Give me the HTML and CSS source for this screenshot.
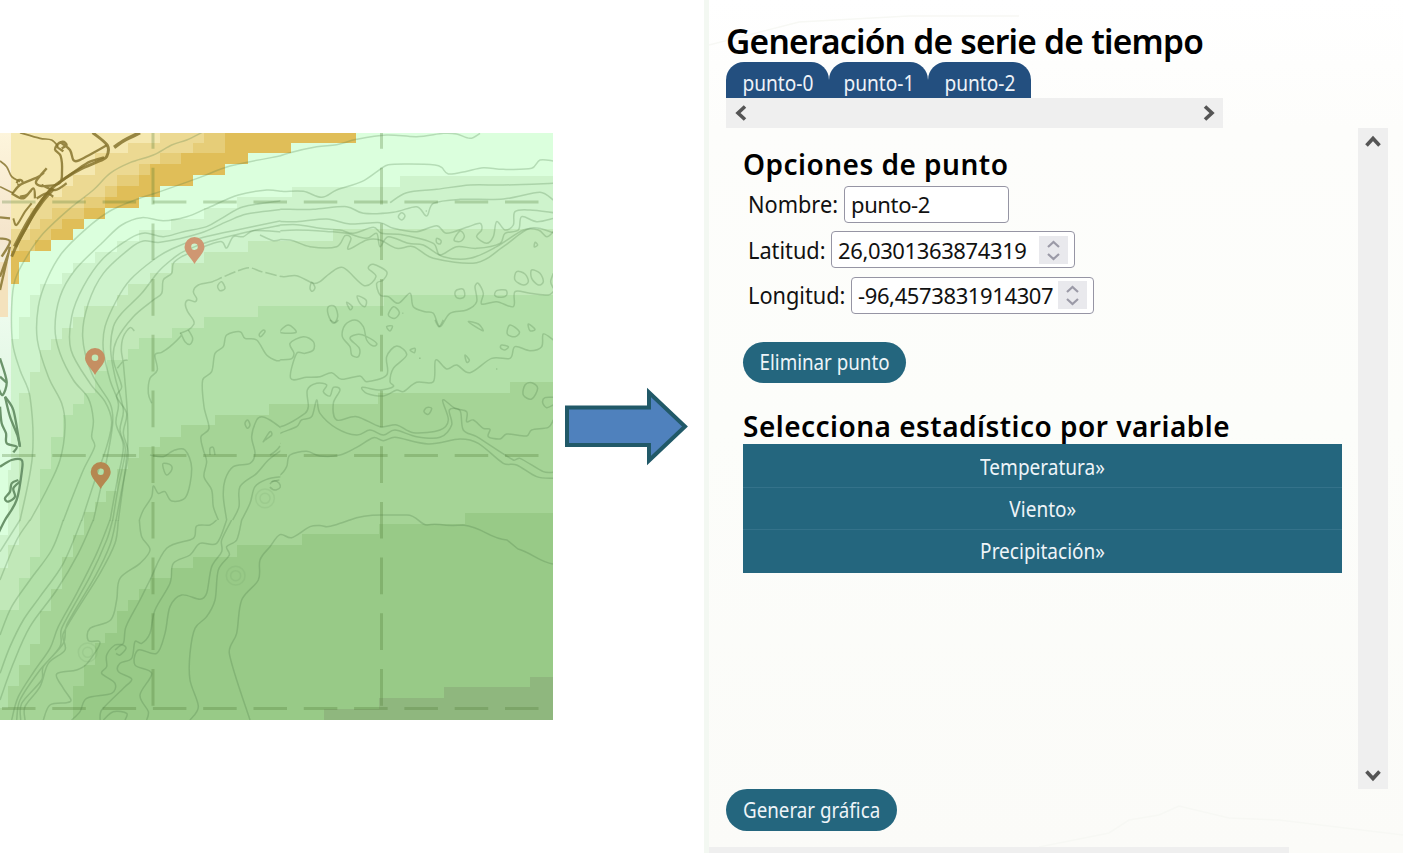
FILE: index.html
```
<!DOCTYPE html>
<html lang="es">
<head>
<meta charset="utf-8">
<title>Generación de serie de tiempo</title>
<link rel="stylesheet" href="styles.css">
</head>
<body>
<main class="layout">
<svg class="map" viewBox="0 133 553 587" width="553" height="587" role="img" aria-label="Mapa">
  <defs>
    <path id="pin" d="M0 14C-3 8-10 3-10-3A10 10 0 0 1 10-3C10 3 3 8 0 14ZM0-6.5A3.3 3.3 0 1 0 0 .1A3.3 3.3 0 1 0 0-6.5Z" fill-rule="evenodd"/>
    <linearGradient id="coast" x1="0" y1="0" x2="0" y2="1"><stop offset="0" stop-color="#fdf5dc"/><stop offset=".3" stop-color="#f5e5cc"/><stop offset=".5" stop-color="#effcef"/><stop offset=".7" stop-color="#e5f8e7"/><stop offset="1" stop-color="#dbfee0"/></linearGradient>
    <clipPath id="west"><path d="M-20-20H841V1172H-20Z"/></clipPath>
    <clipPath id="east"><path d="M31-20H870V800H31Z"/></clipPath>
  </defs>
  <!-- depth bands -->
  <path fill="#dbffdd" d="M0 133H553V720H0Z"/>
  <path fill="#cef3cc" d="M553 176H400V187H292V197H237V208H204V219H171V230H139V241H117V252H95V263H73V273H62V284H40V295H30V317H19V339H11V470H8V535H0V720H553Z"/>
  <path fill="#c1e8b8" d="M553 229H333V241H248V252H204V263H171V273H150V284H128V295H117V306H84V317H73V328H62V339H51V350H40V372H30V393H19V545H8V568H0V720H553Z"/>
  <path fill="#b2e0a8" d="M553 295H384V306H258V317H204V328H172V338H139V349H128V360H107V371H95V393H84V404H73V415H63V437H51V469H40V557H30V578H19V610H0V720H553Z"/>
  <path fill="#a5d496" d="M553 382H510V393H378V404H269V415H215V425H181V437H160V447H139V458H128V469H117V491H106V502H95V512H84V535H73V557H62V589H51V611H40V644H30V665H19V686H8V708H0V720H553Z"/>
  <path fill="#98ca87" d="M553 513H465V524H379V534H302V545H237V557H193V568H171V578H150V589H139V600H128V611H117V633H105V643H95V665H84V686H73V720H553Z"/>
  <path fill="#8fb77e" d="M553 677H530V687H444V698H379V709H324V720H553Z"/>
  <path fill="url(#coast)" d="M0 133H11V470H0Z"/>
  <path fill="#f4e2bd" d="M0 262H8V317H0Z"/>
  <path fill="#e0be58" d="M11 133H356V143H291V153H248V164H225V175H193V186H160V197H139V208H105V219H84V229H73V240H51V251H30V262H19V284H11Z"/>
  <path fill="#e6cd78" d="M11 133H225V153H181V164H150V175H139V186H117V197H105V208H84V219H62V229H51V240H35V251H11Z"/>
  <path fill="#ecd992" d="M11 133H204V143H193V153H160V164H139V175H117V186H105V197H84V208H52V219H40V229H30V240H19V251H11Z"/>
  <path fill="#f5e8b0" d="M11 133H160V143H128V153H107V153H95V175H73V186H62V197H40V208H30V229H11Z"/>
  <!-- graticule -->
  <g class="grid">
    <path d="M2 202H553M2 455.5H553M2 708.5H553" stroke-dasharray="33.5 16.8"/>
    <path d="M153 112V708M381.5 112V708" stroke-dasharray="36.7 19"/>
  </g>
  <!-- coastline -->
  <g class="coast" transform="translate(0 130) scale(.33333)">
    <path d="M278 8L322 46L320 80L300 92L240 118L200 142L150 180L110 235L80 290L55 335L35 380" stroke-width="9"/>
    <path d="M160 175L125 215L85 275L45 350" stroke-width="13"/>
    <path d="M320 46L235 92L220 90L210 60L188 42L178 38L165 58L182 78L186 125L178 160L125 168L108 155L140 115M185 55L200 45L188 35L170 48L190 64M312 82L270 95L230 120L175 160M38 190L60 165L112 142L132 128M50 160L55 150L66 152L66 162L52 165M35 190L70 205L100 175L105 205M125 165L165 180L200 160M60 200L80 195L95 180M110 205L140 190L160 200" stroke-width="7"/>
    <path d="M40 265L50 285L75 245L95 220" stroke-width="6"/>
    <path d="M342 52L375 30L420 8" stroke-width="11"/>
    <path d="M60 8L120 25L155 30L175 50M0 93L20 110L35 140L60 155M0 170L40 190" stroke="#89879c" stroke-width="5" opacity=".4"/>
    <path d="M0 262L30 265M0 325L30 335L5 380M30 350L0 480M25 370L0 440" stroke="#ac9b80" stroke-width="7" opacity=".6"/>
  </g>
  <g class="shore" transform="translate(0 320) scale(.33333)">
    <path d="M0 115L20 185L8 225L-5 205M0 170L22 190" stroke="#bccabc" stroke-width="10"/>
    <path d="M15 230L40 270L60 380" stroke-width="9"/>
    <path d="M15 230L30 290L52 345L60 380M0 260L5 310L18 340L20 370L50 380L40 397M0 440L35 420L65 420L66 450L50 540L15 600L-5 640M55 480L35 490L30 515L15 535L25 545L45 530L40 505L60 485"/>
  </g>
  <!-- isobaths -->
  <g class="iso" transform="translate(0 130) scale(.33333)" clip-path="url(#west)">
    <path d="M605 8L560 30L515 45L460 75L390 98L330 130L280 180L210 235L130 310L80 380L45 450L35 530L38 640L60 720L90 800L97 980L60 1172"/>
    <path d="M845 77L690 108L600 142L480 185L405 210L330 243L260 295L185 370L140 450L115 530L112 630L145 740L185 820L195 890L180 990L140 1080L90 1172"/>
    <path d="M845 184L800 180L715 195L620 235L560 260L490 272L425 263L365 285L310 335L225 420L180 500L165 595L180 670L220 750L265 805L280 870L275 920L284 950L250 1020L210 1120L190 1172"/>
    <path d="M845 212L730 230L670 262L620 290L550 305L490 320L435 309L390 325L310 385L250 470L215 560L213 660L270 760L315 815L335 875L320 950L285 1050L245 1172"/>
    <path d="M845 238L740 252L680 275L600 310L480 337L430 333L390 355L310 430L265 520L248 620L275 730L330 820L338 880L318 1000L280 1172"/>
    <path d="M845 272L700 302L600 325L515 357L460 390L390 450L350 510L315 590L310 660L330 750L355 820L348 880L370 950L350 1060L330 1172"/>
    <path d="M845 285L745 305L630 334L550 365L520 385L475 425L425 490L365 550L340 590L332 660L345 740L370 840L360 900L376 960L355 1070L338 1172"/>
    <path d="M845 306L760 302L730 320L700 320L680 354L665 335L625 345L590 360L545 380L520 400L515 430L490 450L485 490L460 510L400 560L350 630L340 690L365 770L350 800L380 850L370 910L385 970L365 1080L348 1172"/>
    <path d="M845 328L820 332L780 315M403 603L390 593L370 620L364 660L370 700L382 850L382 960L355 1172M383 690L370 693L352 715"/>
    <path d="M635 456L595 465L580 485L590 505L585 515L565 510L556 522L563 545L580 570L582 582L565 600L540 610"/>
    <path d="M635 456L740 414L785 425L845 440" stroke-dasharray="34 9"/>
    <path d="M665 455L653 468L660 482L675 475Z"/>
  </g>
  <g class="iso" transform="translate(270 130) scale(.33333)" clip-path="url(#east)">
    <path d="M-5 90L60 68L140 50L200 44L260 28L350 15L440 20L520 10L560 12L600 25L630 10"/>
    <path d="M-5 178L35 184L100 184L155 202L200 180L275 155L330 118L355 104L420 102L495 105L515 112L535 132L585 125L640 113L700 118L785 115L810 90L850 93"/>
    <path d="M360 218L410 188L500 178L600 165L700 165L850 160M-5 238L60 238L130 238L230 230L280 250L370 247L440 230L470 258L490 220L570 208L700 207L810 187L850 210"/>
    <path d="M-5 273L80 275L170 267L240 282L330 278L370 295L440 305L500 287L530 310L595 290L630 280L635 300L620 320L650 340L670 320L680 275L705 300L730 285L735 245L780 240L850 248"/>
    <path d="M-5 287L80 284L150 295L210 300L250 310L310 292L335 310L400 315L490 340L510 375L560 350L620 355L690 340L705 310L745 300L755 260L800 275L850 265"/>
    <path d="M-5 305L80 300L180 305L230 310L290 325L320 310L330 350L355 320L415 340L460 345L520 380L600 385L680 350L760 300L805 300L830 320L850 305"/>
    <path d="M-5 330L60 330L120 350L200 350L225 317L243 325L235 358L290 330L330 330L380 355L430 350L490 385L620 398L700 350L780 295L850 308"/>
    <path d="M-5 430L40 440L80 437L130 460L150 455L180 430L220 413L283 467L318 440L295 415L310 403L350 425L340 450L320 460L330 495L355 500L385 520L420 490L430 530L465 545L490 550L510 590L540 550L590 540L620 515L615 470L625 460L640 490L635 522L680 515L730 530L735 485L780 490L835 495L850 485"/>
    <path d="M125 457L120 475L127 484L135 473ZM175 530L195 530L203 560L190 580L175 555ZM230 517L247 530L240 539ZM262 498L288 510L285 530L270 520ZM385 260L395 248L405 258L395 270ZM500 325L513 332L510 342L500 338ZM570 303L583 318L572 334L552 330ZM795 337L803 345L793 351ZM740 425L765 432L775 455L760 465L735 450ZM785 420L810 430L820 455L805 465L785 445ZM560 480L580 478L583 500L565 505L555 494ZM680 482L707 480L710 495L695 502L675 497ZM370 530L388 547L375 565L355 555ZM850 430L842 455L850 475M397 550H400M467 243H471"/>
  </g>
  <g class="iso" transform="translate(0 320) scale(.33333)" clip-path="url(#west)">
    <path d="M540 40L545 45L510 80L485 97L465 105L472 150L450 175L445 220L455 250M565 30L578 55L570 73L555 65L545 45"/>
    <path d="M845 120L830 122L800 105L770 60L735 55L720 35L680 45L670 80L645 100L635 155L608 180L612 260L627 325L603 350L610 390L620 425L612 470L635 510L640 560L655 600"/>
    <path d="M778 42L790 30L795 35L782 50ZM735 310L743 300L750 315L742 325ZM790 365L810 335L815 345L795 360ZM630 405L630 385L640 383L645 405M450 405L490 410L520 392L555 390L575 445L558 530L515 543L495 515L475 520L460 498L455 530L430 570L418 600M490 430L512 435L515 450L500 465L490 445ZM845 325L810 300L785 290L770 300L755 350L765 400L750 430L700 440L675 480L670 530L680 600M845 390L805 420L770 460L720 500L717 560L698 600M845 470L800 478L765 500L750 550L725 600M815 485L838 480"/>
    <g opacity=".35"><circle cx="795" cy="535" r="28"/><circle cx="795" cy="535" r="15"/></g>
  </g>
  <g class="iso" transform="translate(270 320) scale(.33333)" clip-path="url(#east)">
    <path d="M30 37L55 15L78 37ZM180 0L195 8L205 0M-5 118L60 118L72 100L60 70L100 50L130 65L130 90L105 100L80 100L62 175L110 172L150 170L185 158L215 178L270 168L290 185L350 165L350 110L380 78L410 105L370 145L360 185L370 200L330 210L277 202L290 220L340 228L380 210L400 215L440 187L490 185L497 120L530 147L560 135L600 158L665 115L720 115L735 80L780 92L815 80L820 42L850 60"/>
    <path d="M240 55L265 43L290 50L320 70L310 78L290 60L280 20L255 0L225 15L217 50L240 80L245 105L265 110L268 85ZM350 20L367 18L360 33ZM420 90L435 85L433 98ZM447 115H452M585 105L598 120L590 127ZM495 0L507 20L520 0M595 5L625 12L640 32L625 25ZM720 15L748 35L735 50L712 42ZM775 12L795 28L780 32ZM695 75L715 80L705 90L692 84ZM678 147H682M765 195L785 188L803 205L785 237L760 225ZM850 232L825 233L818 248L830 263L850 255M470 263L485 265L475 283L462 275Z"/>
    <path d="M-5 295L30 320L105 280L115 260L112 210L140 190L170 195L160 215L180 228L190 202L210 210L190 250L200 300L260 290L330 320L380 315L430 338L510 330L535 300L518 240L555 265L590 275L590 305L610 300L640 325L660 328L655 350L690 357L710 342L770 348L785 330L835 322L850 300"/>
    <path d="M30 372L22 345L80 320L95 300L125 290L140 240L150 280L200 325L260 345L300 330L340 345L375 330L440 350L510 352L545 315L538 270L570 272L580 330L620 350L730 420L750 415L820 455L850 457"/>
    <path d="M-5 470L30 465L50 440L60 405L110 394L150 408L210 405L260 382L310 353L340 362L375 352L475 372L570 357L625 370L700 430L740 435L800 470L850 475"/>
  </g>
  <path class="iso" d="M270 455Q277 451 280 446M270 484Q274 478 279 483Q283 488 276 490Q272 490 270 487"/>
  <g class="iso" transform="translate(0 520) scale(.33333)">
    <path d="M60 0L0 95M90 0L50 60L0 180M190 0L155 90L90 180L35 260L0 345M245 0L190 130L120 230L70 300L30 380L0 460M280 0L235 100L170 210L90 320L40 430L0 540"/>
    <path d="M330 0L290 100L230 220L175 320L150 385L105 450L55 530L35 600M338 0L320 60L270 170L185 325L180 380L120 450L60 540L50 600M348 0L330 75L285 170L200 315L190 370L130 440L125 480L65 550L62 600M355 0L345 70L300 160L190 340L195 390L145 430L120 500L75 560L75 600"/>
    <path d="M418 0L425 50L450 90L420 130L360 175L350 240L332 300L270 325L265 362L300 368L262 430L230 450L170 462L190 505L213 540L200 548L150 555L130 600"/>
    <path d="M650 0L630 15L590 18L580 55L500 85L450 180L420 240L378 320L370 370L345 375L320 405L320 440L305 460L345 490L335 520L260 535L240 575L215 600"/>
    <path d="M680 0L650 70L600 70L570 105L520 130L510 190L465 270L450 340L425 370L405 365L395 415L360 430L355 455L395 477L375 500L305 570L300 600M695 0L665 60L665 95L635 140L620 220L600 238L545 225L510 260L495 340L470 400L415 390L405 435L455 460L420 525L445 575L440 600M725 0L710 60L680 80L688 105L655 150L645 240L620 290L585 325L570 400L570 480L595 560L570 600"/>
    <path d="M1050 0L1005 15L980 20L965 17L930 20L875 53L840 44L810 80L780 120L775 180L725 240L710 340L688 400L750 600M345 390L365 375L378 385L360 405L348 400M310 600L340 575L380 580L375 600"/>
    <g opacity=".35"><circle cx="707" cy="167" r="28"/><circle cx="707" cy="167" r="15"/><circle cx="263" cy="397" r="28"/><circle cx="263" cy="397" r="15"/></g>
  </g>
  <path class="iso" d="M350 520C360 516 370 515 381 515H407C417 515 420 525 427 525C440 522 438 527 463 525C485 528 488 538 507 540L518 549C530 552 540 562 553 564"/>
  <use href="#pin" x="194.500" y="250" fill="#cf9772"/>
  <use href="#pin" x="95" y="361" fill="#c58f62"/>
  <use href="#pin" x="100.700" y="475" fill="#b58750"/>
</svg>
<svg class="arrow" viewBox="0 0 124 82" width="124" height="82"><path d="M2 22.500H84V7.500L120 41.500L84 75.500V60H2Z"/></svg>
<section class="panel">
  <svg class="ghost" viewBox="0 0 694 853" width="694" height="853"><path d="M330 847L400 833L420 820L450 815L470 806L520 818L570 820L694 835M0 45L90 22L200 16L310 16"/></svg>
  <h1 class="title">Generación de serie de tiempo</h1>
  <nav class="tabs"><a class="tab"><span>punto-0</span></a><a class="tab tab-mid"><span>punto-1</span></a><a class="tab"><span>punto-2</span></a></nav>
  <div class="hbar">
    <svg viewBox="0 0 14 16" width="14" height="16"><path d="M12 1.500L5 8L12 14.500"/></svg>
    <svg viewBox="0 0 14 16" width="14" height="16"><path d="M2 1.500L9 8L2 14.500"/></svg>
  </div>
  <div class="scroller">
    <div class="content">
      <h2 class="subtitle">Opciones de punto</h2>
      <div class="form">
        <div class="row"><label class="lab-n"><span>Nombre:</span></label><div class="field name"><span>punto-2</span></div></div>
        <div class="row"><label class="lab-a"><span>Latitud:</span></label><div class="field lat"><span>26,0301363874319</span><i class="spin"><svg viewBox="0 0 29 28" width="29" height="28"><path d="M9 11L14.500 6L20 11M9 18L14.500 23L20 18"/></svg></i></div></div>
        <div class="row"><label class="lab-o"><span>Longitud:</span></label><div class="field lon"><span>-96,4573831914307</span><i class="spin"><svg viewBox="0 0 29 28" width="29" height="28"><path d="M9 11L14.500 6L20 11M9 18L14.500 23L20 18"/></svg></i></div></div>
      </div>
      <button class="pill remove"><span>Eliminar punto</span></button>
      <h2 class="subtitle sub-two">Selecciona estadístico por variable</h2>
      <div class="list"><div class="item"><span>Temperatura»</span></div><div class="item"><span>Viento»</span></div><div class="item"><span>Precipitación»</span></div></div>
    </div>
    <div class="vbar">
      <svg viewBox="0 0 16 14" width="16" height="14"><path d="M1.500 10.500L8 3.500L14.500 10.500"/></svg>
      <svg viewBox="0 0 16 14" width="16" height="14"><path d="M1.500 3.500L8 10.500L14.500 3.500"/></svg>
    </div>
  </div>
  <button class="pill generate"><span>Generar gráfica</span></button>
  <div class="bottom"></div>
</section>
</main>
<script src="map.js"></script>
</body>
</html>
```
FILE: map.js
```
// Rounds the digitised contour polylines into smooth curves.
function smooth(text) {
  const closed = /Z$/.test(text);
  const n = text.match(/-?\d+(\.\d+)?/g).map(Number);
  const p = [];
  for (let i = 0; i < n.length; i += 2) p.push([n[i], n[i + 1]]);
  const len = p.length;
  if (len < 3) return text;
  const at = i => closed ? p[(i + len) % len] : p[Math.max(0, Math.min(len - 1, i))];
  let d = 'M' + p[0];
  const count = closed ? len : len - 1;
  for (let i = 0; i < count; i++) {
    const a = at(i - 1), b = at(i), c = at(i + 1), e = at(i + 2);
    const span = Math.hypot(c[0] - b[0], c[1] - b[1]);
    const ctl = (from, to, o, s) => {
      const vx = to[0] - from[0], vy = to[1] - from[1];
      const m = Math.hypot(vx, vy) || 1;
      const k = s * Math.min(m / 6, span / 2.6) / m;
      return [o[0] + vx * k, o[1] + vy * k];
    };
    d += 'C' + ctl(a, c, b, 1) + ' ' + ctl(b, e, c, -1) + ' ' + c;
  }
  return d + (closed ? 'Z' : '');
}
document.querySelectorAll('g.iso path, .coast path, .shore path').forEach(el => {
  const parts = el.getAttribute('d').match(/M[^M]+/g);
  el.setAttribute('d', parts.map(s => /[HVCQ]/.test(s) ? s : smooth(s)).join(''));
});
```
FILE: styles.css
```
* { box-sizing: border-box; }
body { margin: 0; background: #fff; font-family: "Noto Sans", "Open Sans", sans-serif; color: #111; }
.layout { display: flex; align-items: flex-start; width: 1403px; height: 853px; overflow: hidden; }
.map { display: block; flex: none; margin-top: 133px; }
.grid path { fill: none; stroke: rgba(75, 120, 45, .28); stroke-width: 3; }
.coast path { fill: none; stroke: #83702a; stroke-linejoin: round; opacity: .82; }
.shore path { fill: none; stroke: #6b946b; stroke-width: 7; stroke-linejoin: round; }
.iso { fill: none; stroke: rgba(75, 120, 70, .26); stroke-width: 4.500; stroke-linejoin: round; }
path.iso { stroke-width: 1.5; }
.arrow { flex: none; margin: 385px 0 0 12px; width: 124px; }
.arrow path { fill: #4f81bd; stroke: #215968; stroke-width: 4; }
.panel { position: relative; flex: none; width: 699px; height: 853px; margin-left: 15px; padding-left: 17px; border-left: 5px solid #f3f8f2; background: linear-gradient(#fff 0, #fdfdfb 15%, #fcfdfa 50%, #fbfbf8 100%); display: flex; flex-direction: column; align-items: flex-start; }
.ghost { position: absolute; left: 0; top: 0; pointer-events: none; }
.ghost path { fill: none; stroke: #f7f8f4; stroke-width: 1.5; }
.panel > :not(.ghost) { z-index: 1; }
h1, h2 { margin: 0; color: #000; white-space: nowrap; font-weight: 600; }
.title { margin-top: 21px; height: 41px; font-size: 33.5px; line-height: 41px; letter-spacing: -.75px; }
.tabs { display: flex; height: 36px; }
.tab { width: 103px; height: 36px; border-radius: 18px 18px 0 0; background: #234f7f; color: #eef2f8; font-size: 21.500px; line-height: 41px; text-align: center; }
.tab span { display: inline-block; transform: scaleX(.89); }
.tab-mid { width: 99px; }
.hbar { width: 497px; height: 30px; padding: 0 6px 0 7px; display: flex; justify-content: space-between; align-items: center; background: #efefef; }
.hbar path, .vbar path { fill: none; stroke: #555; stroke-width: 3.600; }
.scroller { display: flex; justify-content: space-between; width: 662px; height: 661px; }
.content { width: 616px; padding: 18px 0 0 17px; display: flex; flex-direction: column; align-items: flex-start; }
.vbar { width: 30px; height: 661px; padding: 7px; background: #efefef; display: flex; flex-direction: column; justify-content: space-between; }
.subtitle { font-size: 28px; line-height: 36px; height: 36px; letter-spacing: .48px; }
.form { margin: 4px 0 0 5px; display: flex; flex-direction: column; gap: 9px; }
.row { display: flex; height: 36.500px; align-items: center; }
.row label { font-size: 23px; white-space: nowrap; }
.row label span { display: inline-block; transform: scaleX(.945); transform-origin: left; }
.lab-n { width: 96px; }
.lab-a { width: 83px; }
.lab-o { width: 103px; }
.field { flex: none; display: flex; align-items: center; justify-content: space-between; height: 37px; border: 1.500px solid #9695a4; border-radius: 4px; background: #fff; padding: 0 6px 0 6px; font-size: 22px; letter-spacing: -.38px; white-space: nowrap; }
.name { width: 165px; }
.lat { width: 244px; }
.lon { width: 243px; }
.spin { display: block; width: 29px; height: 28px; background: #e9e9ed; }
.spin path { fill: none; stroke: #9b9aa7; stroke-width: 2.200; }
.pill { border: 0; border-radius: 21px; height: 41px; background: #24667e; color: #eef4f8; font-family: inherit; font-size: 21.500px; line-height: 40px; padding: 0; text-align: center; white-space: nowrap; }
.pill span { display: inline-block; transform: scaleX(.872); margin: 0 -12px; }
.remove { width: 163px; margin-top: 28px; }
.sub-two { margin-top: 25px; }
.list { width: 599px; height: 129px; background: #24667e; color: #eef4f8; font-size: 21.500px; }
.item { height: 43px; line-height: 45px; text-align: center; }
.item span { display: inline-block; transform: scaleX(.885); }
.item + .item { border-top: 1.500px solid #34728a; height: 42.500px; line-height: 42px; }
.generate { width: 171px; height: 42px; }
.bottom { margin: 16px 0 0 -17px; width: 580px; height: 6px; background: #efefef; }
```
